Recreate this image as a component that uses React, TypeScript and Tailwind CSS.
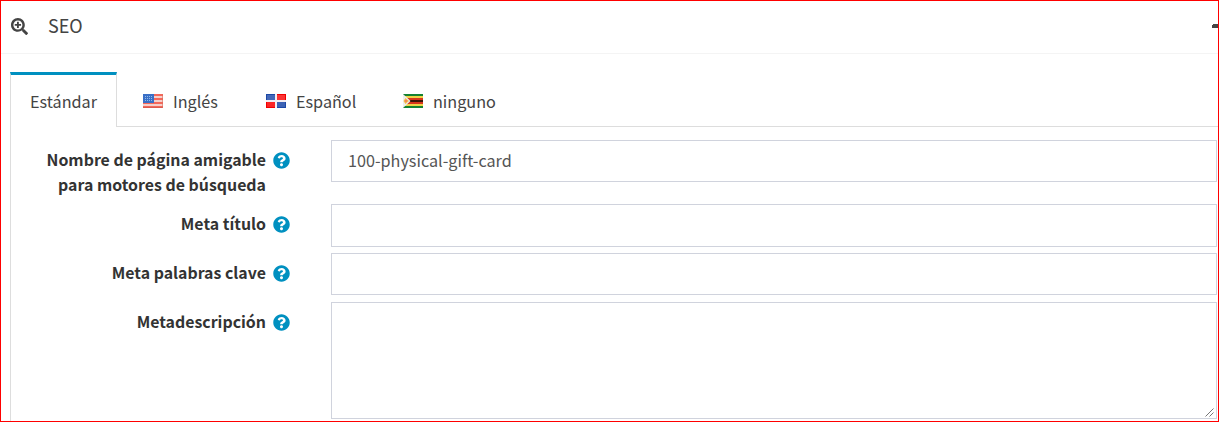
import type { ReactNode } from 'react';
import { FaQuestionCircle, FaSearchPlus } from 'react-icons/fa';

function UsFlag() {
  return (
    <svg width="20" height="14" viewBox="0 0 20 14" shapeRendering="crispEdges">
      <rect width="20" height="14" fill="#f5cfca" />
      {[0, 4, 8, 12].map((y) => (
        <rect key={y} y={y} width="20" height="2" fill="#f4685a" />
      ))}
      <rect width="11" height="9" fill="#3a6fc6" />
      {[2, 4, 6].map((y) =>
        [2, 4, 6, 8].map((x) => <rect key={`${x}-${y}`} x={x} y={y} width="1" height="1" fill="#8fb9ea" />),
      )}
      <rect x="0" y="13" width="20" height="1" fill="#d95b4e" />
      <rect x="19" y="0" width="1" height="14" fill="#d9705f" fillOpacity="0.6" />
    </svg>
  );
}

function DominicanFlag() {
  return (
    <svg width="20" height="14" viewBox="0 0 20 14" shapeRendering="crispEdges">
      <rect width="20" height="14" fill="#f3eef3" />
      <rect width="9" height="6" fill="#1c48a5" />
      <rect x="1" y="1" width="8" height="5" fill="#4468b8" />
      <rect x="11" width="9" height="6" fill="#f00000" />
      <rect x="11" y="1" width="8" height="5" fill="#fb3535" />
      <rect y="8" width="9" height="6" fill="#f00000" />
      <rect x="1" y="8" width="8" height="5" fill="#fb2525" />
      <rect x="11" y="8" width="9" height="6" fill="#1c48a5" />
      <rect x="11" y="8" width="8" height="5" fill="#3d62b4" />
    </svg>
  );
}

function ZimbabweFlag() {
  return (
    <svg width="20" height="14" viewBox="0 0 20 14">
      <rect width="20" height="14" fill="#158232" />
      <rect y="2" width="20" height="10" fill="#efd348" />
      <rect y="4" width="20" height="6" fill="#d8361c" />
      <rect y="6" width="20" height="2" fill="#401408" />
      <path d="M0 0L7.5 7L0 14Z" fill="#eeeeee" />
      <path d="M0.5 7L2.5 4L4 5.5L6 7L4 8.5L2.5 10Z" fill="#f5bd4a" />
      <circle cx="3" cy="7" r="1.2" fill="#f3865a" />
    </svg>
  );
}

function Tab({ icon, label, width }: { icon: ReactNode; label: string; width: string }) {
  return (
    <div className={`flex h-[55px] items-center gap-[10px] border-b border-[#dddddd] pt-[3px] ${width}`}>
      {icon}
      <span className="leading-[24px]">{label}</span>
    </div>
  );
}

function Label({ children }: { children: ReactNode }) {
  return (
    <div className="flex w-[279px] shrink-0 justify-end gap-[7px] pt-[7px] text-right text-[15.9px] font-bold leading-[25px] text-[#333333]">
      <span>{children}</span>
      <FaQuestionCircle className="mt-[5px] size-[17px] shrink-0 text-[#0090c0]" />
    </div>
  );
}

function Field({ label, children }: { label: ReactNode; children: ReactNode }) {
  return (
    <div className="flex gap-[41px]">
      <Label>{label}</Label>
      {children}
    </div>
  );
}

const input = 'w-[886px] border border-[#d0d3dd] bg-white px-4 text-[#555555] outline-none';

export default function App() {
  return (
    <div className="h-[422px] w-[1219px] overflow-hidden border border-[#ff0000] bg-white font-['Noto_Sans_CJK_SC',sans-serif] text-[16.2px] text-[#444444]">
      <header className="flex h-[53px] items-center border-b border-[#f4f4f4] pl-[10px]">
        <FaSearchPlus className="size-[17px] -translate-y-px" />
        <span className="ml-[20px] pb-[4px] text-[18px] leading-[26px]">SEO</span>
        <svg className="mb-[3px] ml-auto" width="6" height="4" viewBox="0 0 6 4" shapeRendering="crispEdges">
          <path d="M1 0H6V4H0V1H1Z" fill="#444444" />
        </svg>
      </header>
      <div className="ml-[9px] mt-[18px]">
        <nav className="flex h-[55px]">
          <div className="flex h-[55px] w-[107px] items-center justify-center border-x border-t-[3px] border-x-[#dddddd] border-t-[#0090c0]">
            <span className="leading-[24px]">Estándar</span>
          </div>
          <Tab icon={<UsFlag />} label="Inglés" width="w-[123px] pl-[26px]" />
          <Tab icon={<DominicanFlag />} label="Español" width="w-[137px] pl-[26px]" />
          <Tab icon={<ZimbabweFlag />} label="ninguno" width="flex-1 pl-[26px]" />
        </nav>
        <div className="flex h-[300px] flex-col border-l border-[#dddddd] pt-[13px]">
          <div className="h-[64px]">
            <Field label={<>Nombre de página amigable<br />para motores de búsqueda</>}>
              <input className={`h-[42px] pb-[2px] ${input}`} defaultValue="100-physical-gift-card" />
            </Field>
          </div>
          <div className="h-[49px]">
            <Field label="Meta título">
              <input className={`h-[43px] ${input}`} />
            </Field>
          </div>
          <div className="h-[49px]">
            <Field label="Meta palabras clave">
              <input className={`h-[42px] ${input}`} />
            </Field>
          </div>
          <Field label="Metadescripción">
            <div className="relative h-[117px]">
              <textarea className={`block h-[117px] resize-none ${input}`} />
              <svg className="absolute bottom-[2px] right-[3px]" width="9" height="9" viewBox="0 0 9 9">
                <path d="M0.5 8.5L8.5 0.5M4.5 8.5L8.5 4.5" stroke="#666666" strokeWidth="0.9" />
              </svg>
            </div>
          </Field>
        </div>
      </div>
    </div>
  );
}
